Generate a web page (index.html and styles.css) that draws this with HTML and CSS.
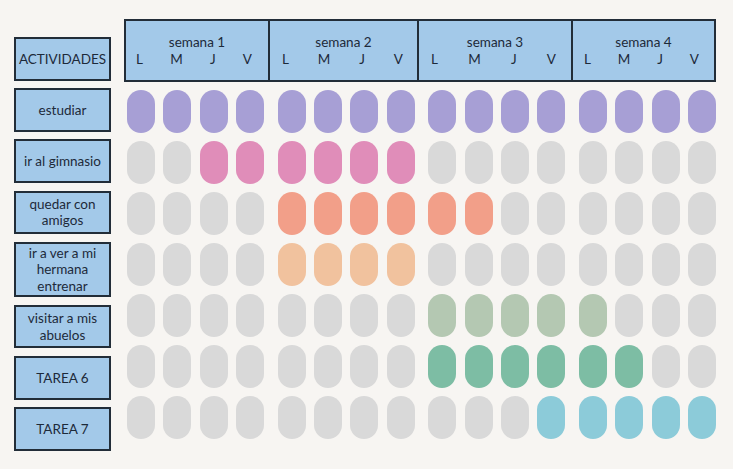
FILE: index.html
```html
<!DOCTYPE html>
<html lang="es">
<head>
<meta charset="utf-8">
<title>Actividades</title>
<link rel="stylesheet" href="styles.css">
</head>
<body>
<div class="page">
  <div class="labels">
    <div class="label">ACTIVIDADES</div>
    <div class="label">estudiar</div>
    <div class="label">ir al gimnasio</div>
    <div class="label">quedar con amigos</div>
    <div class="label tall">ir a ver a mi hermana entrenar</div>
    <div class="label">visitar a mis abuelos</div>
    <div class="label">TAREA 6</div>
    <div class="label">TAREA 7</div>
  </div>
  <div class="board">
    <div class="header">
      <div class="week w1"><div class="title">semana 1</div><div class="days"><span>L</span><span>M</span><span>J</span><span>V</span></div></div>
      <div class="week w2"><div class="title">semana 2</div><div class="days"><span>L</span><span>M</span><span>J</span><span>V</span></div></div>
      <div class="week w3"><div class="title">semana 3</div><div class="days"><span>L</span><span>M</span><span>J</span><span>V</span></div></div>
      <div class="week w4"><div class="title">semana 4</div><div class="days"><span>L</span><span>M</span><span>J</span><span>V</span></div></div>
    </div>
    <div class="rows">
      <div class="row">
        <div class="group"><i class="pill purple"></i><i class="pill purple"></i><i class="pill purple"></i><i class="pill purple"></i></div>
        <div class="group"><i class="pill purple"></i><i class="pill purple"></i><i class="pill purple"></i><i class="pill purple"></i></div>
        <div class="group"><i class="pill purple"></i><i class="pill purple"></i><i class="pill purple"></i><i class="pill purple"></i></div>
        <div class="group"><i class="pill purple"></i><i class="pill purple"></i><i class="pill purple"></i><i class="pill purple"></i></div>
      </div>
      <div class="row">
        <div class="group"><i class="pill"></i><i class="pill"></i><i class="pill pink"></i><i class="pill pink"></i></div>
        <div class="group"><i class="pill pink"></i><i class="pill pink"></i><i class="pill pink"></i><i class="pill pink"></i></div>
        <div class="group"><i class="pill"></i><i class="pill"></i><i class="pill"></i><i class="pill"></i></div>
        <div class="group"><i class="pill"></i><i class="pill"></i><i class="pill"></i><i class="pill"></i></div>
      </div>
      <div class="row">
        <div class="group"><i class="pill"></i><i class="pill"></i><i class="pill"></i><i class="pill"></i></div>
        <div class="group"><i class="pill salmon"></i><i class="pill salmon"></i><i class="pill salmon"></i><i class="pill salmon"></i></div>
        <div class="group"><i class="pill salmon"></i><i class="pill salmon"></i><i class="pill"></i><i class="pill"></i></div>
        <div class="group"><i class="pill"></i><i class="pill"></i><i class="pill"></i><i class="pill"></i></div>
      </div>
      <div class="row">
        <div class="group"><i class="pill"></i><i class="pill"></i><i class="pill"></i><i class="pill"></i></div>
        <div class="group"><i class="pill peach"></i><i class="pill peach"></i><i class="pill peach"></i><i class="pill peach"></i></div>
        <div class="group"><i class="pill"></i><i class="pill"></i><i class="pill"></i><i class="pill"></i></div>
        <div class="group"><i class="pill"></i><i class="pill"></i><i class="pill"></i><i class="pill"></i></div>
      </div>
      <div class="row">
        <div class="group"><i class="pill"></i><i class="pill"></i><i class="pill"></i><i class="pill"></i></div>
        <div class="group"><i class="pill"></i><i class="pill"></i><i class="pill"></i><i class="pill"></i></div>
        <div class="group"><i class="pill sage"></i><i class="pill sage"></i><i class="pill sage"></i><i class="pill sage"></i></div>
        <div class="group"><i class="pill sage"></i><i class="pill"></i><i class="pill"></i><i class="pill"></i></div>
      </div>
      <div class="row">
        <div class="group"><i class="pill"></i><i class="pill"></i><i class="pill"></i><i class="pill"></i></div>
        <div class="group"><i class="pill"></i><i class="pill"></i><i class="pill"></i><i class="pill"></i></div>
        <div class="group"><i class="pill green"></i><i class="pill green"></i><i class="pill green"></i><i class="pill green"></i></div>
        <div class="group"><i class="pill green"></i><i class="pill green"></i><i class="pill"></i><i class="pill"></i></div>
      </div>
      <div class="row">
        <div class="group"><i class="pill"></i><i class="pill"></i><i class="pill"></i><i class="pill"></i></div>
        <div class="group"><i class="pill"></i><i class="pill"></i><i class="pill"></i><i class="pill"></i></div>
        <div class="group"><i class="pill"></i><i class="pill"></i><i class="pill"></i><i class="pill cyan"></i></div>
        <div class="group"><i class="pill cyan"></i><i class="pill cyan"></i><i class="pill cyan"></i><i class="pill cyan"></i></div>
      </div>
    </div>
  </div>
</div>
</body>
</html>
```

FILE: styles.css
```css
* { box-sizing: border-box; }

html, body {
  margin: 0;
  padding: 0;
  background: #f7f5f2;
}

body {
  font-family: Lato, "Noto Sans", "Liberation Sans", sans-serif;
  font-size: 13.5px;
  color: #1d2a3a;
  width: 733px;
  height: 469px;
  overflow: hidden;
}

.page {
  display: flex;
  align-items: flex-start;
  padding: 19px 0 0 14px;
}

.labels {
  width: 97px;
  margin-top: 18px;
  display: flex;
  flex-direction: column;
  gap: 7.7px;
}

.label {
  min-height: 43.5px;
  border: 2px solid #222d38;
  background: #a3c9e9;
  display: flex;
  align-items: center;
  justify-content: center;
  text-align: center;
  padding: 1px 5px;
  line-height: 16.5px;
}

.label.tall {
  min-height: 55px;
}

.board {
  margin-left: 13px;
  width: 592px;
}

.header {
  height: 63px;
  border: 2px solid #222d38;
  background: #a3c9e9;
  display: grid;
  grid-template-columns: 142px 149px 154px 143px;
}

.week {
  padding-top: 13px;
  text-align: center;
}

.week + .week {
  border-left: 2px solid #222d38;
}

.title {
  line-height: 17px;
}

.days {
  display: flex;
  justify-content: space-between;
  line-height: 17px;
  padding: 0 16px 0 10px;
}

.w2 .days { padding: 0 14px 0 12px; }
.w3 .days { padding: 0 15px 0 12px; }
.w4 .days { padding: 0 15px 0 11px; }

.rows {
  margin-top: 8px;
  display: flex;
  flex-direction: column;
  gap: 8px;
}

.row {
  display: flex;
  gap: 13.7px;
  padding-left: 3px;
}

.group {
  display: flex;
  gap: 8.33px;
}

.pill {
  display: block;
  width: 28px;
  height: 43px;
  border-radius: 14px;
  background: #d9d9d9;
}

.pill.purple { background: #a79fd5; }
.pill.pink { background: #e08db9; }
.pill.salmon { background: #f29f89; }
.pill.peach { background: #f1c29e; }
.pill.sage { background: #b4c8b2; }
.pill.green { background: #7dbda4; }
.pill.cyan { background: #8ccbd9; }
```
